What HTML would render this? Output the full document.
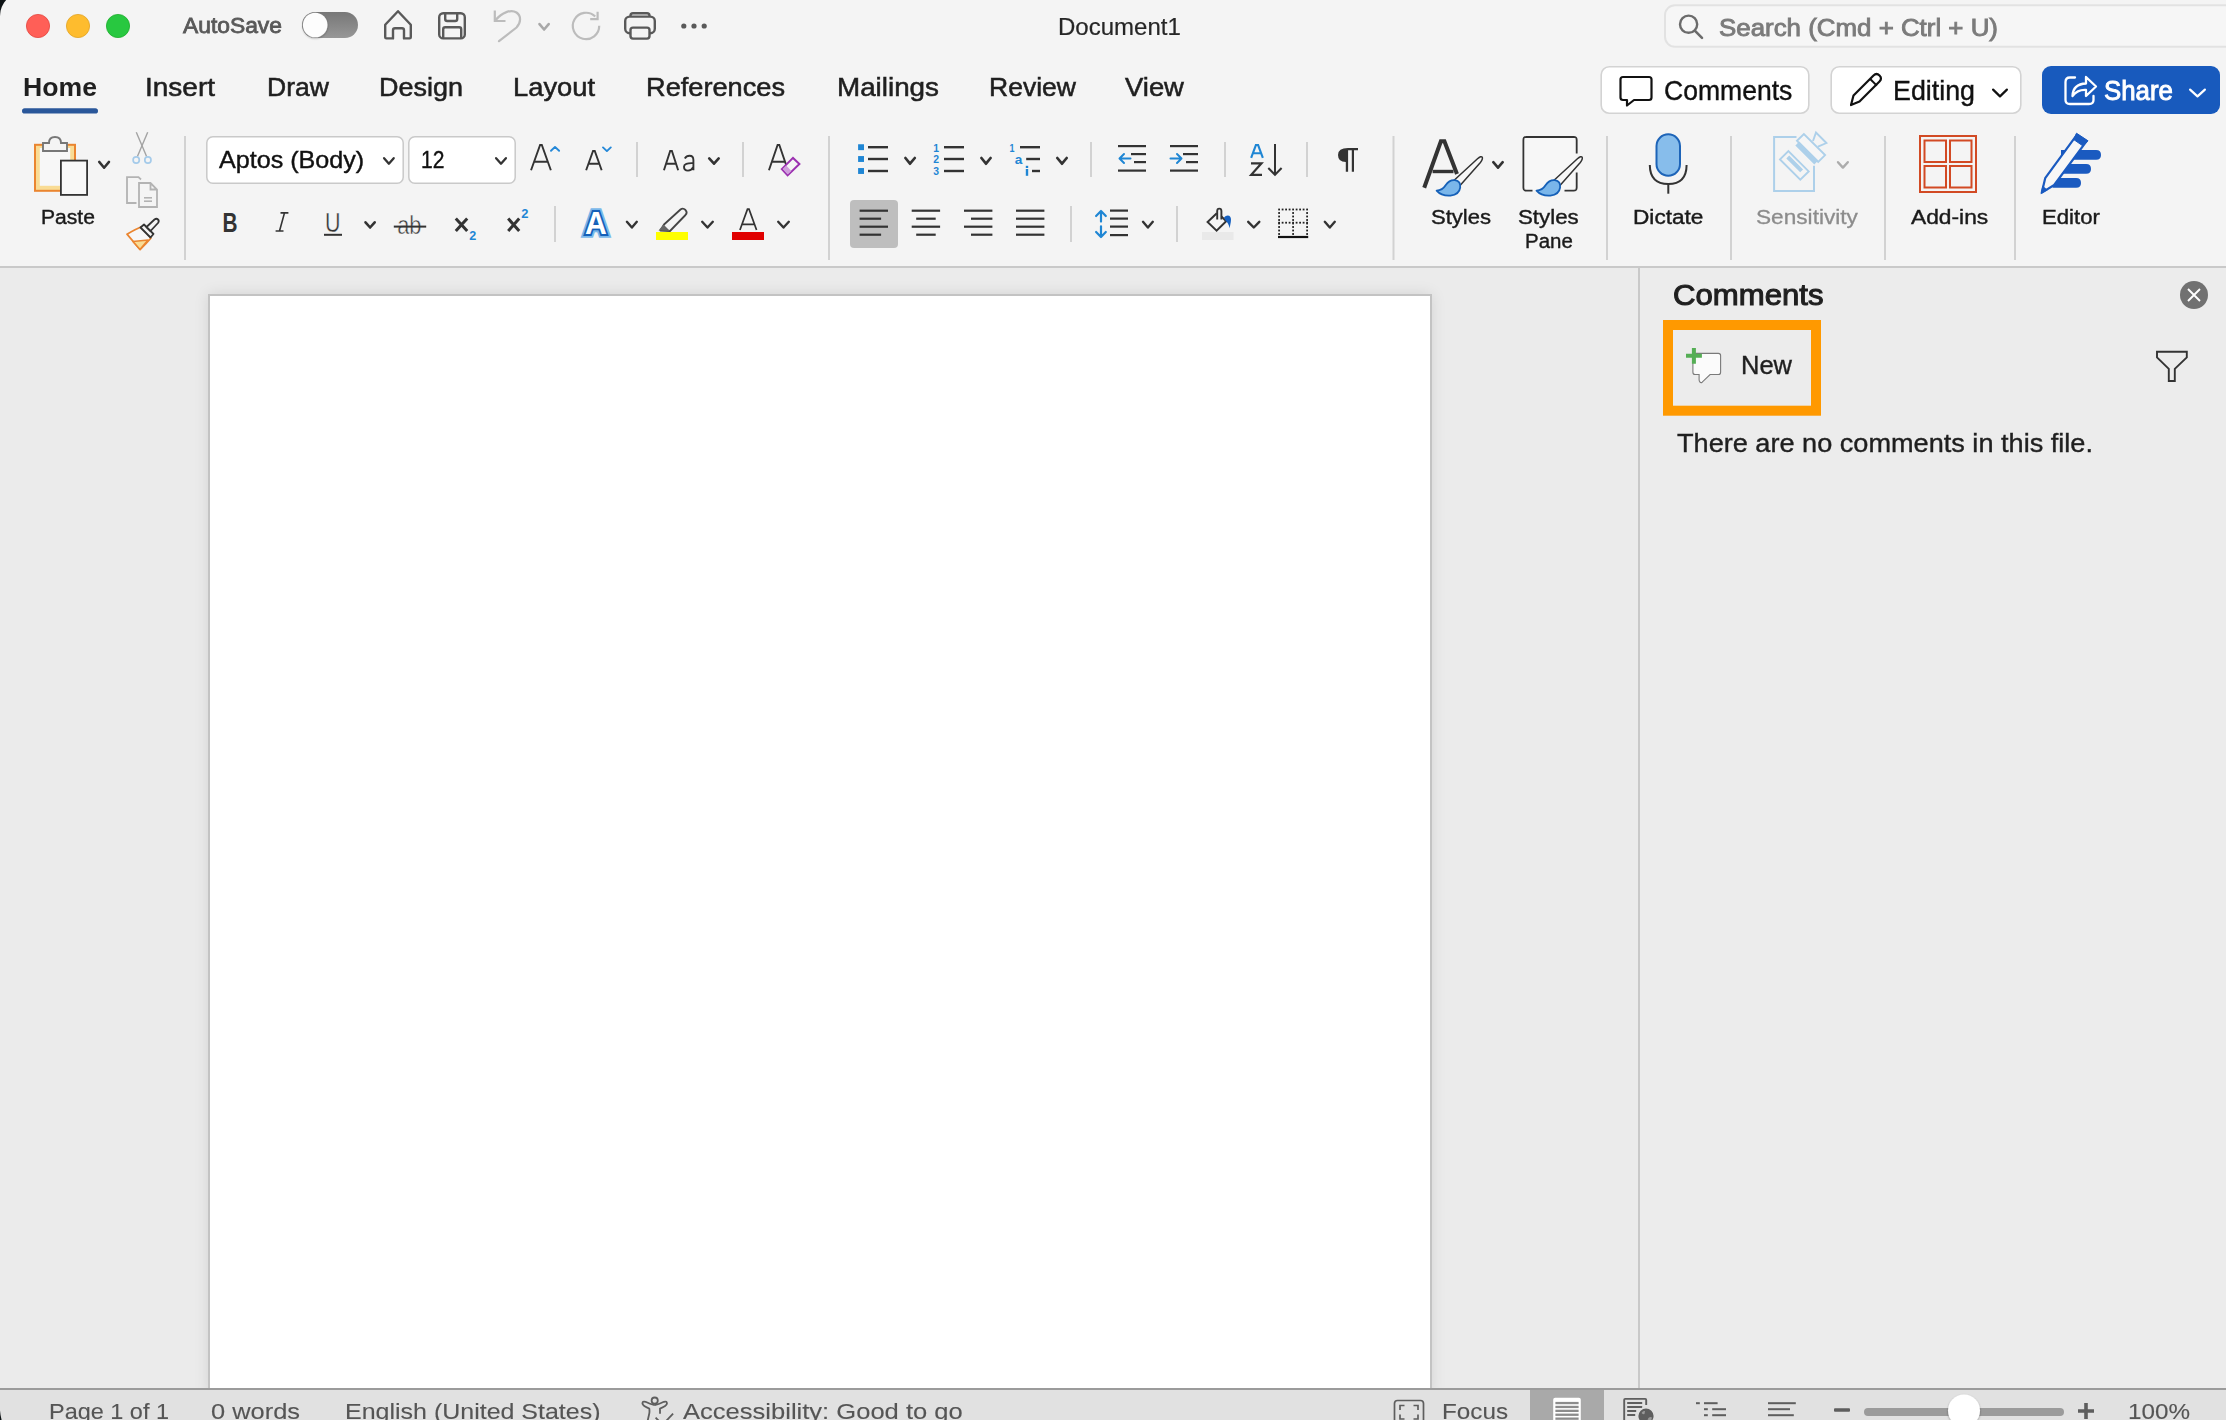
<!DOCTYPE html><html><head><meta charset="utf-8"><title>Document1</title><style>
*{margin:0;padding:0;box-sizing:border-box}
html,body{width:2226px;height:1420px;overflow:hidden;background:#0e1315}
body{position:relative;font-family:"Liberation Sans",sans-serif}
.win{position:absolute;left:0;top:-8px;width:2240px;height:1440px;background:#f4f4f4;border-top-left-radius:24px;overflow:hidden}
.abs{position:absolute}
.t{position:absolute;white-space:nowrap;line-height:0;transform-origin:0 0;font-family:"Liberation Sans",sans-serif}
svg.ov{position:absolute;left:0;top:0}
</style></head><body>
<div class="win"></div>
<div class="abs" style="left:0;top:266px;width:2226px;height:2px;background:#c9c9c9"></div>
<div class="abs" style="left:0;top:268px;width:1638px;height:1120px;background:#ebebeb"></div>
<div class="abs" style="left:1638px;top:268px;width:2px;height:1120px;background:#c9c9c9"></div>
<div class="abs" style="left:1640px;top:268px;width:586px;height:1120px;background:#ececec"></div>
<div class="abs" style="left:208px;top:294px;width:1224px;height:1100px;background:#fff;border:2px solid #c3c3c3;border-bottom:none;box-shadow:0 0 14px rgba(0,0,0,0.10)"></div>
<div class="abs" style="left:0;top:1388px;width:2226px;height:2px;background:#9b9b9b"></div>
<div class="abs" style="left:0;top:1390px;width:2226px;height:30px;background:#e1e1e1"></div>
<div class="abs" style="left:1530px;top:1390px;width:74px;height:30px;background:#a9a9a9"></div>
<svg class="ov" width="2226" height="1420" viewBox="0 0 2226 1420"><circle cx="38" cy="26" r="11.6" fill="#ff5f57" stroke="#e2463f" stroke-width="0.8"/><circle cx="78" cy="26" r="11.6" fill="#febc2e" stroke="#e1a325" stroke-width="0.8"/><circle cx="118" cy="26" r="11.6" fill="#28c840" stroke="#1dad2b" stroke-width="0.8"/><defs><linearGradient id="tg" x1="0" y1="0" x2="0" y2="1"><stop offset="0" stop-color="#777"/><stop offset="1" stop-color="#979797"/></linearGradient><filter id="sh" x="-50%" y="-50%" width="200%" height="200%"><feDropShadow dx="0" dy="1" stdDeviation="1" flood-opacity="0.35"/></filter></defs><rect x="302" y="12" width="56" height="26" rx="13" fill="url(#tg)"/><circle cx="315.2" cy="25" r="12.3" fill="#fdfdfd" filter="url(#sh)"/><path d="M385.2 24.8 L398 11.2 L410.8 24.8 V37.2 Q410.8 38.4 409.6 38.4 H404 V30.2 Q404 28.2 402 28.2 H395 Q393 28.2 393 30.2 V38.4 H386.4 Q385.2 38.4 385.2 37.2 Z" fill="none" stroke="#595959" stroke-width="2.4" stroke-linejoin="round"/><rect x="439.2" y="13.3" width="25.6" height="25.1" rx="4" fill="none" stroke="#595959" stroke-width="2.4"/><path d="M445.2 13.5 V19 Q445.2 21 447.2 21 H455.2 Q457.2 21 457.2 19 V13.5" fill="none" stroke="#595959" stroke-width="2.4"/><path d="M443.2 38.4 V29.2 Q443.2 27.2 445.2 27.2 H459.2 Q461.2 27.2 461.2 29.2 V38.4" fill="none" stroke="#595959" stroke-width="2.4"/><polyline points="494.8,10.5 494.8,21 505.5,21" fill="none" stroke="#bcbcbc" stroke-width="2.2"/><path d="M495.5 20.2 C 502 12.5, 511 9, 516.5 12.5 C 521.5 16, 521 22.5, 516.5 27.5 L 499 41.2" fill="none" stroke="#bcbcbc" stroke-width="2.2" stroke-linecap="round"/><polyline points="539.5,24.1 544.1,29.5 548.7,24.1" fill="none" stroke="#a8a8a8" stroke-width="2.6" stroke-linecap="round" stroke-linejoin="round"/><path d="M595.2 16.5 A 13.2 13.2 0 1 0 599.2 25.8" fill="none" stroke="#bcbcbc" stroke-width="2.2"/><polyline points="590.2,19.2 597.6,19.2 597.6,11.8" fill="none" stroke="#bcbcbc" stroke-width="2.2"/><rect x="630.5" y="13.2" width="19" height="8" rx="2.5" fill="none" stroke="#595959" stroke-width="2.4"/><rect x="625.2" y="16.6" width="29.6" height="16.6" rx="4.5" fill="#f4f4f4" stroke="#595959" stroke-width="2.4"/><rect x="630.5" y="27.6" width="19" height="11" rx="2.5" fill="#f4f4f4" stroke="#595959" stroke-width="2.4"/><circle cx="683.8" cy="26" r="2.6" fill="#595959"/><circle cx="694" cy="26" r="2.6" fill="#595959"/><circle cx="704.2" cy="26" r="2.6" fill="#595959"/><rect x="1665" y="5.2" width="1557.5" height="41.6" rx="10" fill="#f6f6f6" stroke="#e2e2e2" stroke-width="2"/><circle cx="1688.6" cy="24.2" r="8.6" fill="none" stroke="#6b6b6b" stroke-width="2.4"/><line x1="1694.8" y1="30.6" x2="1702" y2="37.8" stroke="#6b6b6b" stroke-width="2.6" stroke-linecap="round"/><rect x="1601.2" y="66.8" width="207.6" height="46.4" rx="8" fill="#ffffff" stroke="#d3d3d3" stroke-width="1.6"/><path d="M1623 77 H1649 Q1651.5 77 1651.5 79.5 V97.5 Q1651.5 100 1649 100 H1634 L1627 105.5 V100 H1623 Q1620.5 100 1620.5 97.5 V79.5 Q1620.5 77 1623 77 Z" fill="none" stroke="#111" stroke-width="2.2" stroke-linejoin="round"/><rect x="1831.2" y="66.8" width="189.6" height="46.4" rx="8" fill="#ffffff" stroke="#d3d3d3" stroke-width="1.6"/><path d="M1851 105 L1853.5 95.5 L1873.5 75.5 Q1876.5 72.5 1879.5 75.5 Q1882.5 78.5 1879.5 81.5 L1859.5 101.5 Z" fill="none" stroke="#111" stroke-width="2.2" stroke-linejoin="round"/><line x1="1870.2" y1="79" x2="1876.8" y2="85.6" stroke="#111" stroke-width="2"/><polyline points="1993.1,89.6 2000.0,96.4 2006.9,89.6" fill="none" stroke="#111" stroke-width="2.2" stroke-linecap="round" stroke-linejoin="round"/><rect x="2042" y="66" width="178" height="48" rx="9" fill="#185abd"/><path d="M2075 77.5 H2070 Q2065.5 77.5 2065.5 82 V100 Q2065.5 104 2070 104 H2089 Q2093.5 104 2093.5 100 V96" fill="none" stroke="#fff" stroke-width="2.3" stroke-linecap="round"/><path d="M2072.5 96 Q2073 84 2086 83.5 V77 L2096 86.5 L2086 96 V90 Q2077.5 89.5 2072.5 96 Z" fill="none" stroke="#fff" stroke-width="2.3" stroke-linejoin="round"/><polyline points="2190.1,89.6 2197.5,96.4 2204.9,89.6" fill="none" stroke="#fff" stroke-width="2.2" stroke-linecap="round" stroke-linejoin="round"/><rect x="22" y="108.2" width="76" height="5.4" rx="2.7" fill="#2a579a"/><rect x="184.0" y="136" width="2" height="124" fill="#d2d2d2"/><rect x="828.0" y="136" width="2" height="124" fill="#d2d2d2"/><rect x="1392.5" y="136" width="2" height="124" fill="#d2d2d2"/><rect x="1606.0" y="136" width="2" height="124" fill="#d2d2d2"/><rect x="1730.0" y="136" width="2" height="124" fill="#d2d2d2"/><rect x="1884.0" y="136" width="2" height="124" fill="#d2d2d2"/><rect x="2014.0" y="136" width="2" height="124" fill="#d2d2d2"/><rect x="636.0" y="142" width="2" height="35" fill="#d2d2d2"/><rect x="742.0" y="142" width="2" height="35" fill="#d2d2d2"/><rect x="1090.0" y="142" width="2" height="35" fill="#d2d2d2"/><rect x="1224.0" y="142" width="2" height="35" fill="#d2d2d2"/><rect x="1306.0" y="142" width="2" height="35" fill="#d2d2d2"/><rect x="554.0" y="206" width="2" height="36" fill="#d2d2d2"/><rect x="1070.0" y="206" width="2" height="36" fill="#d2d2d2"/><rect x="1176.0" y="206" width="2" height="36" fill="#d2d2d2"/><rect x="35" y="144.8" width="40" height="46" fill="#f9dc95" stroke="#ea8530" stroke-width="2"/><rect x="39.8" y="148" width="30.4" height="37.8" fill="#f7f7f7"/><path d="M43 151 V143 H49 Q49 137 55 137 Q61 137 61 143 H67 V151 Z" fill="#f4f4f4" stroke="#777" stroke-width="1.9"/><rect x="60.9" y="160.6" width="26.2" height="34.3" fill="#f8f8f8" stroke="#333" stroke-width="1.8"/><polyline points="99.2,161.9 104.1,167.8 109.0,161.9" fill="none" stroke="#333333" stroke-width="2.5" stroke-linecap="round" stroke-linejoin="round"/><line x1="136.3" y1="132.3" x2="146.6" y2="156.5" stroke="#a3a3a3" stroke-width="1.4"/><line x1="147.7" y1="132.3" x2="137.4" y2="156.5" stroke="#a3a3a3" stroke-width="1.4"/><circle cx="136.2" cy="160" r="3.1" fill="none" stroke="#a5cbea" stroke-width="1.7"/><circle cx="147.9" cy="160" r="3.1" fill="none" stroke="#a5cbea" stroke-width="1.7"/><path d="M136.5 203 H127 V177.2 H138.5 L141 179.5" fill="none" stroke="#b3b3b3" stroke-width="1.8"/><path d="M139 183 H150.5 L157 189.5 V207 H139 Z M150.5 183 V189.5 H157" fill="#f4f4f4" stroke="#b3b3b3" stroke-width="1.8" stroke-linejoin="miter"/><line x1="144" y1="197.8" x2="152" y2="197.8" stroke="#b3b3b3" stroke-width="1.6"/><line x1="144" y1="201.2" x2="152" y2="201.2" stroke="#b3b3b3" stroke-width="1.6"/><path d="M127 234.2 Q136 229 141 227 L151 238 Q146 244 140 249.5 Z" fill="#f7f7f7" stroke="#ea8530" stroke-width="1.8" stroke-linejoin="round"/><path d="M133 241.5 L148 240 L140 249.5 Z" fill="#f9dc95" stroke="#ea8530" stroke-width="1.6" stroke-linejoin="round"/><path d="M140.5 227.5 L144 224.5 L153.5 234 L150.5 237.5 Z" fill="#f4f4f4" stroke="#333" stroke-width="1.8" stroke-linejoin="round"/><path d="M146.5 227 L154.5 219.5 Q156.5 218 158 219.5 Q159.5 221 158 223 L150.5 231 Z" fill="#f4f4f4" stroke="#333" stroke-width="1.8" stroke-linejoin="round"/><rect x="206.8" y="136.8" width="196.4" height="46.4" rx="6" fill="#fff" stroke="#c9c9c9" stroke-width="1.5"/><polyline points="384.1,158.2 388.9,163.7 393.7,158.2" fill="none" stroke="#333333" stroke-width="2.3" stroke-linecap="round" stroke-linejoin="round"/><rect x="408.8" y="136.8" width="106.4" height="46.4" rx="6" fill="#fff" stroke="#c9c9c9" stroke-width="1.5"/><polyline points="496.1,158.2 501.0,163.7 505.9,158.2" fill="none" stroke="#333333" stroke-width="2.3" stroke-linecap="round" stroke-linejoin="round"/><path d="M531.04 170.20 L540.10 145.05 H541.81 L550.86 170.20 M534.10 161.70 H547.80" fill="none" stroke="#333333" stroke-width="1.9" stroke-linejoin="miter"/><polyline points="551.0,150.8 555.0,146.9 559.1,150.8" fill="none" stroke="#2488d8" stroke-width="1.9" stroke-linecap="round" stroke-linejoin="round"/><path d="M586.14 170.20 L593.05 150.95 H594.76 L601.66 170.20 M588.47 163.70 H599.33" fill="none" stroke="#333333" stroke-width="1.9" stroke-linejoin="miter"/><polyline points="603.0,147.4 606.9,151.1 610.8,147.4" fill="none" stroke="#2488d8" stroke-width="1.9" stroke-linecap="round" stroke-linejoin="round"/><path d="M663.94 170.20 L670.19 150.95 H671.90 L678.16 170.20 M666.06 163.70 H676.04" fill="none" stroke="#333333" stroke-width="1.9" stroke-linejoin="miter"/><path d="M684.8 158.6 Q686.5 155.8 689.5 155.8 Q693.4 155.8 693.4 160 V170.2 M693.4 163.2 Q684 162.8 684 166.8 Q684 170.6 688 170.6 Q691.5 170.6 693.4 167" fill="none" stroke="#333" stroke-width="1.9"/><polyline points="709.2,158.4 714.0,163.7 718.7,158.4" fill="none" stroke="#333333" stroke-width="2.6" stroke-linecap="round" stroke-linejoin="round"/><path d="M768.94 170.20 L777.60 145.05 H779.31 L787.96 170.20 M771.87 161.70 H785.03" fill="none" stroke="#333333" stroke-width="1.9" stroke-linejoin="miter"/><path d="M781.8 169.1 L793 157.9 L799.4 163.9 L787.6 175.4 Z" fill="#f4f4f4" stroke="#9b30b0" stroke-width="2" stroke-linejoin="miter"/><path d="M782.6 169.1 L786.2 165.5 L791.4 171 L787.7 174.5 Z" fill="#cf9ddc"/><rect x="858.1" y="144.25" width="5.9" height="5.9" fill="#1f86d4"/><rect x="868" y="146.0" width="20" height="2.4" fill="#333333"/><rect x="858.1" y="156.05" width="5.9" height="5.9" fill="#1f86d4"/><rect x="868" y="157.8" width="20" height="2.4" fill="#333333"/><rect x="858.1" y="168.05" width="5.9" height="5.9" fill="#1f86d4"/><rect x="868" y="169.8" width="20" height="2.4" fill="#333333"/><polyline points="905.4,158.0 910.0,163.7 914.8,158.0" fill="none" stroke="#333333" stroke-width="2.7" stroke-linecap="round" stroke-linejoin="round"/><text x="933.2" y="151.5" font-family="Liberation Sans" font-weight="bold" font-size="11" fill="#1f86d4" textLength="5.8" lengthAdjust="spacingAndGlyphs">1</text><rect x="944" y="146.0" width="20" height="2.4" fill="#333333"/><text x="933.2" y="163.3" font-family="Liberation Sans" font-weight="bold" font-size="11" fill="#1f86d4" textLength="5.8" lengthAdjust="spacingAndGlyphs">2</text><rect x="944" y="157.8" width="20" height="2.4" fill="#333333"/><text x="933.2" y="175.3" font-family="Liberation Sans" font-weight="bold" font-size="11" fill="#1f86d4" textLength="5.8" lengthAdjust="spacingAndGlyphs">3</text><rect x="944" y="169.8" width="20" height="2.4" fill="#333333"/><polyline points="981.4,158.0 986.0,163.7 990.6,158.0" fill="none" stroke="#333333" stroke-width="2.7" stroke-linecap="round" stroke-linejoin="round"/><text x="1009.5" y="151.5" font-family="Liberation Sans" font-weight="bold" font-size="11" fill="#1f86d4" textLength="5" lengthAdjust="spacingAndGlyphs">1</text><rect x="1020" y="146" width="20" height="2.4" fill="#333333"/><text x="1014.8" y="164" font-family="Liberation Sans" font-weight="bold" font-size="13.5" fill="#1f86d4" textLength="7.6" lengthAdjust="spacingAndGlyphs">a</text><rect x="1026.2" y="157.8" width="13.8" height="2.4" fill="#333333"/><rect x="1025.8" y="169" width="2.4" height="6.8" fill="#1f86d4"/><rect x="1025.8" y="165.8" width="2.4" height="2.2" fill="#1f86d4"/><rect x="1032" y="169.8" width="8" height="2.4" fill="#333333"/><polyline points="1057.3,158.0 1062.0,163.7 1066.7,158.0" fill="none" stroke="#333333" stroke-width="2.7" stroke-linecap="round" stroke-linejoin="round"/><rect x="1118" y="145" width="28" height="2.2" fill="#333333"/><rect x="1131" y="153" width="15" height="2.2" fill="#333333"/><rect x="1134" y="161" width="12" height="2.2" fill="#333333"/><rect x="1118" y="169.5" width="28" height="2.2" fill="#333333"/><rect x="1170" y="145" width="28" height="2.2" fill="#333333"/><rect x="1183" y="153" width="15" height="2.2" fill="#333333"/><rect x="1186" y="161" width="12" height="2.2" fill="#333333"/><rect x="1170" y="169.5" width="28" height="2.2" fill="#333333"/><path d="M1130.5 158.5 H1119.5 M1124 154 L1119.5 158.5 L1124 163" fill="none" stroke="#1f86d4" stroke-width="2" stroke-linecap="round" stroke-linejoin="round"/><path d="M1170.5 158.5 H1181.5 M1177 154 L1181.5 158.5 L1177 163" fill="none" stroke="#1f86d4" stroke-width="2" stroke-linecap="round" stroke-linejoin="round"/><path d="M1251.15 157.80 L1255.90 145.05 H1258.10 L1262.85 157.80 M1252.87 153.20 H1261.13" fill="none" stroke="#1f86d4" stroke-width="2.1" stroke-linejoin="miter"/><path d="M1251 163.3 H1261.5 L1251.2 174.8 H1262" fill="none" stroke="#333" stroke-width="2.2" stroke-linejoin="miter"/><path d="M1275 144 V175 M1268.3 168 L1275 174.8 L1281.6 168" fill="none" stroke="#333" stroke-width="2" stroke-linejoin="miter"/><path d="M1348 148 H1358 V150.3 H1354 V171.8 H1351.8 V150.3 H1348.1 V171.8 H1345.8 V162 Q1338 162 1338 155 Q1338 148 1348 148 Z" fill="#333"/><text x="222.5" y="231.8" font-family="Liberation Sans" font-weight="bold" font-size="27.5" fill="#333" textLength="15" lengthAdjust="spacingAndGlyphs">B</text><path d="M280.5 212.9 H288.4 M275.6 231 H283.5 M284.5 212.9 L279.5 231" fill="none" stroke="#333" stroke-width="1.6"/><text x="325" y="231.8" font-family="Liberation Sans" font-size="27" fill="#333" textLength="15.5" lengthAdjust="spacingAndGlyphs" stroke="#f4f4f4" stroke-width="0.4">U</text><rect x="324" y="233.8" width="18" height="2" fill="#333"/><polyline points="365.5,222.3 370.1,227.5 374.7,222.3" fill="none" stroke="#333333" stroke-width="2.6" stroke-linecap="round" stroke-linejoin="round"/><text x="397.2" y="233.6" font-family="Liberation Sans" font-size="26" fill="#3a3a3a" textLength="24.2" lengthAdjust="spacingAndGlyphs" stroke="#f4f4f4" stroke-width="0.5">ab</text><rect x="393.8" y="225.6" width="32.4" height="2" fill="#333"/><path d="M455.8 218.6 L467.2 231 M467.2 218.6 L455.8 231" stroke="#333" stroke-width="3" stroke-linecap="butt"/><text x="469.3" y="239.5" font-family="Liberation Sans" font-size="13" fill="#1f86d4" textLength="7" lengthAdjust="spacingAndGlyphs" font-weight="bold">2</text><path d="M508.2 218.6 L519.2 231 M519.2 218.6 L508.2 231" stroke="#333" stroke-width="3" stroke-linecap="butt"/><text x="521.2" y="218" font-family="Liberation Sans" font-size="13" fill="#1f86d4" textLength="7.2" lengthAdjust="spacingAndGlyphs" font-weight="bold">2</text><text x="584.9" y="234" font-family="Liberation Sans" font-weight="bold" font-size="30.7" fill="#fff" stroke="#7ab8ea" stroke-width="7.6" stroke-linejoin="miter" stroke-miterlimit="3" paint-order="stroke" textLength="21.8" lengthAdjust="spacingAndGlyphs">A</text><text x="584.9" y="234" font-family="Liberation Sans" font-weight="bold" font-size="30.7" fill="#fff" stroke="#1560b8" stroke-width="3.8" stroke-linejoin="miter" stroke-miterlimit="3" paint-order="stroke" textLength="21.8" lengthAdjust="spacingAndGlyphs">A</text><polyline points="626.9,221.8 631.9,227.5 636.8,221.8" fill="none" stroke="#333333" stroke-width="2.4" stroke-linecap="round" stroke-linejoin="round"/><path d="M660.5 230.5 L664 224.5 L680.5 209.5 Q683 207.5 685.5 210 Q687.8 212.5 685.5 215 L670 231 Z" fill="#f4f4f4" stroke="#444" stroke-width="1.8" stroke-linejoin="round"/><path d="M658.5 230.5 L663.5 224.5 L670 231 Z" fill="#666"/><rect x="656" y="232" width="32" height="8" fill="#fefe00"/><polyline points="702.2,221.8 707.5,227.5 712.8,221.8" fill="none" stroke="#333333" stroke-width="2.4" stroke-linecap="round" stroke-linejoin="round"/><path d="M739.93 230.00 L747.49 209.15 H749.01 L756.57 230.00 M742.00 224.30 H754.50" fill="none" stroke="#333333" stroke-width="1.7" stroke-linejoin="miter"/><rect x="732" y="232" width="32" height="8" fill="#e00000"/><polyline points="778.2,221.8 783.5,227.5 788.8,221.8" fill="none" stroke="#333333" stroke-width="2.4" stroke-linecap="round" stroke-linejoin="round"/><rect x="850" y="200" width="48" height="48" rx="4" fill="#bebebe"/><rect x="859.6" y="209.6" width="28.4" height="2.2" fill="#333333"/><rect x="859.6" y="217.6" width="21.5" height="2.2" fill="#333333"/><rect x="859.6" y="225.6" width="28.4" height="2.2" fill="#333333"/><rect x="859.6" y="233.6" width="21.5" height="2.2" fill="#333333"/><rect x="911.7" y="209.6" width="28.4" height="2.2" fill="#333333"/><rect x="916.2" y="217.6" width="19.5" height="2.2" fill="#333333"/><rect x="911.7" y="225.6" width="28.4" height="2.2" fill="#333333"/><rect x="916.2" y="233.6" width="19.5" height="2.2" fill="#333333"/><rect x="964" y="209.6" width="28.4" height="2.2" fill="#333333"/><rect x="971" y="217.6" width="21.4" height="2.2" fill="#333333"/><rect x="964" y="225.6" width="28.4" height="2.2" fill="#333333"/><rect x="971" y="233.6" width="21.4" height="2.2" fill="#333333"/><rect x="1016" y="209.6" width="28.4" height="2.2" fill="#333333"/><rect x="1016" y="217.6" width="28.4" height="2.2" fill="#333333"/><rect x="1016" y="225.6" width="28.4" height="2.2" fill="#333333"/><rect x="1016" y="233.6" width="28.4" height="2.2" fill="#333333"/><rect x="1110" y="209.5" width="18" height="2.2" fill="#333333"/><rect x="1110" y="217.5" width="18" height="2.2" fill="#333333"/><rect x="1110" y="225.5" width="18" height="2.2" fill="#333333"/><rect x="1110" y="234" width="18" height="2.2" fill="#333333"/><path d="M1101 211 V221.6 M1101 226.3 V236.8 M1096.1 216 L1101 211 L1105.8 216 M1096.1 232 L1101 237 L1105.8 232" fill="none" stroke="#1f86d4" stroke-width="2.2" stroke-linecap="round" stroke-linejoin="round"/><polyline points="1143.0,221.8 1147.9,227.5 1152.8,221.8" fill="none" stroke="#333333" stroke-width="2.4" stroke-linecap="round" stroke-linejoin="round"/><path d="M1216.8 213.2 L1207.6 222 L1216.6 230.6 L1226.2 221.2 L1221.4 216.4" fill="#f4f4f4" stroke="#333" stroke-width="2" stroke-linejoin="miter"/><path d="M1217.2 219.5 V211 Q1217.2 208.6 1219.3 208.6 Q1221.4 208.6 1221.4 211 V219.5" fill="none" stroke="#333" stroke-width="1.9"/><path d="M1224 217.5 Q1226.5 214.6 1229.2 215.8 Q1231.6 217.4 1230.8 222 L1229.6 228.3 Q1228.6 223 1225.5 220.5 Z" fill="#1560c0"/><rect x="1202" y="232" width="31.6" height="8" fill="#e9e9e9"/><polyline points="1248.2,221.8 1253.8,227.5 1259.3,221.8" fill="none" stroke="#333333" stroke-width="2.4" stroke-linecap="round" stroke-linejoin="round"/><rect x="1278.2" y="208.6" width="1.8" height="1.8" fill="#222"/><rect x="1278.2" y="212.1" width="1.8" height="1.8" fill="#222"/><rect x="1278.2" y="215.6" width="1.8" height="1.8" fill="#222"/><rect x="1278.2" y="219.1" width="1.8" height="1.8" fill="#222"/><rect x="1278.2" y="221.8" width="1.8" height="1.8" fill="#222"/><rect x="1278.2" y="222.6" width="1.8" height="1.8" fill="#222"/><rect x="1278.2" y="226.1" width="1.8" height="1.8" fill="#222"/><rect x="1278.2" y="229.6" width="1.8" height="1.8" fill="#222"/><rect x="1278.2" y="233.1" width="1.8" height="1.8" fill="#222"/><rect x="1281.7" y="208.6" width="1.8" height="1.8" fill="#222"/><rect x="1281.7" y="221.8" width="1.8" height="1.8" fill="#222"/><rect x="1285.2" y="208.6" width="1.8" height="1.8" fill="#222"/><rect x="1285.2" y="221.8" width="1.8" height="1.8" fill="#222"/><rect x="1288.7" y="208.6" width="1.8" height="1.8" fill="#222"/><rect x="1288.7" y="221.8" width="1.8" height="1.8" fill="#222"/><rect x="1292.2" y="208.6" width="1.8" height="1.8" fill="#222"/><rect x="1292.2" y="212.1" width="1.8" height="1.8" fill="#222"/><rect x="1292.2" y="215.6" width="1.8" height="1.8" fill="#222"/><rect x="1292.2" y="219.1" width="1.8" height="1.8" fill="#222"/><rect x="1292.2" y="221.8" width="1.8" height="1.8" fill="#222"/><rect x="1292.2" y="222.6" width="1.8" height="1.8" fill="#222"/><rect x="1292.2" y="226.1" width="1.8" height="1.8" fill="#222"/><rect x="1292.2" y="229.6" width="1.8" height="1.8" fill="#222"/><rect x="1292.2" y="233.1" width="1.8" height="1.8" fill="#222"/><rect x="1295.7" y="208.6" width="1.8" height="1.8" fill="#222"/><rect x="1295.7" y="221.8" width="1.8" height="1.8" fill="#222"/><rect x="1299.2" y="208.6" width="1.8" height="1.8" fill="#222"/><rect x="1299.2" y="221.8" width="1.8" height="1.8" fill="#222"/><rect x="1302.7" y="208.6" width="1.8" height="1.8" fill="#222"/><rect x="1302.7" y="221.8" width="1.8" height="1.8" fill="#222"/><rect x="1306.2" y="208.6" width="1.8" height="1.8" fill="#222"/><rect x="1306.2" y="212.1" width="1.8" height="1.8" fill="#222"/><rect x="1306.2" y="215.6" width="1.8" height="1.8" fill="#222"/><rect x="1306.2" y="219.1" width="1.8" height="1.8" fill="#222"/><rect x="1306.2" y="221.8" width="1.8" height="1.8" fill="#222"/><rect x="1306.2" y="222.6" width="1.8" height="1.8" fill="#222"/><rect x="1306.2" y="226.1" width="1.8" height="1.8" fill="#222"/><rect x="1306.2" y="229.6" width="1.8" height="1.8" fill="#222"/><rect x="1306.2" y="233.1" width="1.8" height="1.8" fill="#222"/><rect x="1278" y="235.9" width="30.2" height="2.2" fill="#111"/><polyline points="1324.8,221.8 1329.8,227.5 1334.8,221.8" fill="none" stroke="#333333" stroke-width="2.4" stroke-linecap="round" stroke-linejoin="round"/><path d="M1424.2 187.7 L1440.9 141.2 H1444.4 L1457 174" fill="none" stroke="#333" stroke-width="4" stroke-linejoin="miter"/><path d="M1432.6 171.5 H1453.5" stroke="#333" stroke-width="3.4"/><path d="M1453.6 180.8 L1477.5 158.8 Q1481.2 155.6 1482.2 157.2 Q1483.2 159 1480.2 162.8 L1459.6 186 Z" fill="#f7f7f7" stroke="#333" stroke-width="1.5" stroke-linejoin="round"/><path d="M1436.6 190.6 Q1442.5 190.2 1445.6 185.2 Q1449.5 179.6 1455 180.2 Q1461 181.2 1460.2 187.6 Q1459.2 194.6 1450.5 195.6 Q1441.5 196.2 1436.6 190.6 Z" fill="#7ab6ea" stroke="#1560b8" stroke-width="1.8" stroke-linejoin="round"/><polyline points="1493.3,162.2 1498.0,167.7 1502.7,162.2" fill="none" stroke="#333333" stroke-width="2.6" stroke-linecap="round" stroke-linejoin="round"/><path d="M1532.5 190.6 H1526.5 Q1523.5 190.6 1523.5 187.6 V140 Q1523.5 137 1526.5 137 H1573.6 Q1576.6 137 1576.6 140 V153.6 M1576.6 172.4 V187.6 Q1576.6 190.6 1573.6 190.6 H1564.5" fill="none" stroke="#333" stroke-width="2"/><rect x="1524.5" y="138" width="51" height="51.6" fill="#f7f7f7" opacity="0.9"/><path d="M1553.5 180.8 L1577.4 158.8 Q1581.1000000000001 155.6 1582.1000000000001 157.2 Q1583.1000000000001 159 1580.1000000000001 162.8 L1559.5 186 Z" fill="#f7f7f7" stroke="#333" stroke-width="1.5" stroke-linejoin="round"/><path d="M1536.5 190.6 Q1542.4 190.2 1545.5 185.2 Q1549.4 179.6 1554.9 180.2 Q1560.9 181.2 1560.1000000000001 187.6 Q1559.1000000000001 194.6 1550.4 195.6 Q1541.4 196.2 1536.5 190.6 Z" fill="#7ab6ea" stroke="#1560b8" stroke-width="1.8" stroke-linejoin="round"/><rect x="1656.5" y="134.3" width="23.5" height="41.4" rx="11.75" fill="#87bdeb" stroke="#1d64b8" stroke-width="2"/><path d="M1649.8 165 Q1650 184 1668.3 184 Q1686.5 184 1686.6 165" fill="none" stroke="#333" stroke-width="2"/><line x1="1668.3" y1="184" x2="1668.3" y2="193.7" stroke="#333" stroke-width="2"/><path d="M1796.5 137 H1774.1 V190.9 H1814 V165.8" fill="none" stroke="#add0ea" stroke-width="2"/><path d="M1780 159.4 L1788.4 151.1 L1808.7 171.4 L1800.3 179.7 Z" fill="none" stroke="#add0ea" stroke-width="1.9"/><path d="M1787.2 158.5 L1789.2 156.4 L1802.2 169.4 L1800.2 171.4 Z" fill="#add0ea" stroke="#add0ea" stroke-width="1.2"/><path d="M1797 140.8 L1803.9 134 L1825.1 155.1 L1818.2 162 Z" fill="#f6f6f6" stroke="#add0ea" stroke-width="1.9"/><path d="M1797 145.5 L1799.2 143.3 L1816.5 160.5 L1814.3 162.7 Z" fill="#add0ea" stroke="#add0ea" stroke-width="2.4"/><path d="M1813 141 L1816 132.5 L1826.4 143 L1818 146.6" fill="none" stroke="#add0ea" stroke-width="1.9" stroke-linejoin="miter"/><polyline points="1838.0,162.2 1842.9,167.6 1847.8,162.2" fill="none" stroke="#acacac" stroke-width="2.4" stroke-linecap="round" stroke-linejoin="round"/><rect x="1920" y="136" width="56" height="56" fill="none" stroke="#d24a24" stroke-width="2"/><rect x="1924.5" y="140.5" width="21.5" height="21.5" fill="none" stroke="#d24a24" stroke-width="2"/><rect x="1950" y="140.5" width="21.5" height="21.5" fill="none" stroke="#d24a24" stroke-width="2"/><rect x="1924.5" y="166" width="21.5" height="21.5" fill="none" stroke="#d24a24" stroke-width="2"/><rect x="1950" y="166" width="21.5" height="21.5" fill="none" stroke="#d24a24" stroke-width="2"/><path d="M2061 150.1 H2096.2 Q2101 150.1 2101 155 Q2101 159.8 2096.2 159.8 H2061 Z" fill="#1a5ac0"/><path d="M2058 164.1 H2086.2 Q2091 164.1 2091 169 Q2091 173.8 2086.2 173.8 H2058 Z" fill="#1a5ac0"/><path d="M2052.7 178.1 H2076.2 Q2081 178.1 2081 183 Q2081 187.8 2076.2 187.8 H2052.7 Z" fill="#1a5ac0"/><path d="M2041.8 192.6 L2045.2 178.2 L2076.8 134.8 L2086.4 141.4 L2054.2 185 Z" fill="#f7f7f7" stroke="#1a5ac0" stroke-width="2.2" stroke-linejoin="round"/><path d="M2076.5 133.2 L2088 140.8 L2083 146 L2073.8 139.6 Z" fill="#1a5ac0" stroke="#1a5ac0" stroke-width="1" stroke-linejoin="round"/><path d="M2040.6 194.2 L2042.4 185.5 L2047.8 190 Z" fill="#1a5ac0"/><circle cx="2194" cy="295" r="14" fill="#717171"/><path d="M2188 289 L2200 301 M2200 289 L2188 301" stroke="#fff" stroke-width="1.9" stroke-linecap="butt"/><rect x="1668" y="325" width="148" height="85.7" fill="none" stroke="#ff9900" stroke-width="10"/><path d="M1695.2 353.4 H1718.4 Q1720.6 353.4 1720.6 355.6 V372.2 Q1720.6 374.5 1718.4 374.5 H1710.1 L1702.2 382.2 Q1700.8 383.2 1699.6 381.6 Q1699.1 380.8 1699.1 379.6 V374.5 H1695.2 Q1692.9 374.5 1692.9 372.2 V355.6 Q1692.9 353.4 1695.2 353.4 Z" fill="#fbfbfb" stroke="#7a7a7a" stroke-width="1.1"/><path d="M1693.9 348 V363.8 M1686 355.85 H1701.9" stroke="#55ae55" stroke-width="4"/><path d="M2157 351.8 H2186.8 V357.4 L2174.8 368.8 V381 H2168.8 V368.8 L2157 357.4 Z" fill="none" stroke="#333" stroke-width="1.9" stroke-linejoin="miter"/><circle cx="654.7" cy="1400.6" r="3.1" fill="none" stroke="#5e5e5e" stroke-width="1.8"/><path d="M654.7 1405.2 Q650 1404 645.5 1401.8 Q642.2 1400.8 642.5 1403.8 Q643 1406 649.3 1408.6 Q649.8 1412 649 1414.8 L647.6 1421 M654.7 1405.2 Q659.4 1404 663.9 1401.8 Q667.2 1400.8 666.9 1403.8 Q666.4 1406 660 1408.6 V1413.8" fill="none" stroke="#5e5e5e" stroke-width="1.8" stroke-linejoin="round"/><path d="M655.6 1417.7 L659 1421 M666.1 1421 L673.1 1413.6" fill="none" stroke="#5e5e5e" stroke-width="1.8"/><rect x="1394.5" y="1400.5" width="29" height="25" rx="3" fill="none" stroke="#5e5e5e" stroke-width="1.7"/><path d="M1400 1410 V1405.5 H1404.5 M1413.5 1405.5 H1418 V1410 M1400 1414.5 V1419 H1404.5 M1418 1414.5 V1419 H1413.5" fill="none" stroke="#5e5e5e" stroke-width="1.7"/><rect x="1553.2" y="1397.8" width="27.6" height="30" rx="2" fill="#fff"/><rect x="1555.4" y="1400.2" width="23.2" height="30" fill="#fff"/><rect x="1555.4" y="1401.9" width="23.2" height="2.3" fill="#8c8c8c"/><rect x="1555.4" y="1405.8" width="23.2" height="2.3" fill="#8c8c8c"/><rect x="1555.4" y="1409.7" width="23.2" height="2.3" fill="#8c8c8c"/><rect x="1555.4" y="1413.6" width="23.2" height="2.3" fill="#8c8c8c"/><rect x="1555.4" y="1417.5" width="23.2" height="2.3" fill="#8c8c8c"/><path d="M1647 1422 H1625 Q1624.2 1422 1624.2 1421 V1399.8 Q1624.2 1398.9 1625.2 1398.9 H1645.2 Q1646.2 1398.9 1646.2 1399.9 V1405" fill="none" stroke="#5e5e5e" stroke-width="1.9"/><rect x="1627.2" y="1402" width="15" height="2" fill="#5e5e5e"/><rect x="1627.2" y="1406" width="15" height="2" fill="#5e5e5e"/><rect x="1627.2" y="1410" width="9" height="2" fill="#5e5e5e"/><rect x="1627.2" y="1414" width="8" height="2" fill="#5e5e5e"/><circle cx="1646" cy="1416" r="8.4" fill="#5e5e5e" stroke="#e1e1e1" stroke-width="1.6"/><path d="M1641.5 1413 Q1643 1410.5 1645 1411 L1644.5 1414 Q1642.5 1414.5 1641.5 1413 Z M1647.5 1419.5 Q1649.5 1416 1652 1417.5 L1651 1421 Z" fill="#9a9a9a"/><rect x="1696" y="1402.2" width="3.8" height="2" fill="#5e5e5e"/><rect x="1704" y="1402.2" width="13.6" height="2" fill="#5e5e5e"/><rect x="1704" y="1408.2" width="3.8" height="2" fill="#5e5e5e"/><rect x="1712.2" y="1408.2" width="13.8" height="2" fill="#5e5e5e"/><rect x="1704" y="1414.2" width="3.8" height="2" fill="#5e5e5e"/><rect x="1712.2" y="1414.2" width="13.8" height="2" fill="#5e5e5e"/><rect x="1768" y="1402.2" width="27.8" height="2" fill="#5e5e5e"/><rect x="1768" y="1408.2" width="22" height="2" fill="#5e5e5e"/><rect x="1768" y="1414.2" width="25.8" height="2" fill="#5e5e5e"/><path d="M0 1410.5 V1420 H1.6 Q0.4 1415.5 0 1410.5 Z" fill="#0e1315"/><rect x="1834" y="1408.2" width="16" height="3.6" rx="1" fill="#5e5e5e"/><rect x="1864" y="1408" width="200" height="8" rx="4" fill="#9b9b9b"/><circle cx="1964" cy="1410.5" r="16" fill="#fff" filter="url(#sh)"/><path d="M2078 1411 H2094 M2086 1403 V1419" stroke="#5e5e5e" stroke-width="3.6"/></svg>
<div class="t" id="autosave" style="left:183.00px;top:26.40px;font-size:21.65px;font-weight:normal;color:#595959;transform:scaleX(1.0547);-webkit-text-stroke:0.8px #595959;">AutoSave</div>
<div class="t" id="doc1" style="left:1057.60px;top:26.77px;font-size:23.74px;font-weight:normal;color:#262626;transform:scaleX(1.0122);-webkit-text-stroke:0.2px #262626;">Document1</div>
<div class="t" id="search" style="left:1719.00px;top:27.68px;font-size:24.58px;font-weight:normal;color:#7b7b7b;transform:scaleX(1.0529);-webkit-text-stroke:0.9px #7b7b7b;">Search (Cmd + Ctrl + U)</div>
<div class="t" id="t_home" style="left:23.00px;top:87.01px;font-size:26.54px;font-weight:bold;color:#1f1f1f;transform:scaleX(1.0038);">Home</div>
<div class="t" id="t_insert" style="left:145.00px;top:87.01px;font-size:26.54px;font-weight:normal;color:#1f1f1f;transform:scaleX(1.0547);-webkit-text-stroke:0.55px #1f1f1f;">Insert</div>
<div class="t" id="t_draw" style="left:267.00px;top:87.01px;font-size:26.54px;font-weight:normal;color:#1f1f1f;transform:scaleX(1.0002);-webkit-text-stroke:0.55px #1f1f1f;">Draw</div>
<div class="t" id="t_design" style="left:379.00px;top:87.01px;font-size:26.54px;font-weight:normal;color:#1f1f1f;transform:scaleX(1.0169);-webkit-text-stroke:0.55px #1f1f1f;">Design</div>
<div class="t" id="t_layout" style="left:513.00px;top:87.01px;font-size:26.54px;font-weight:normal;color:#1f1f1f;transform:scaleX(1.0293);-webkit-text-stroke:0.55px #1f1f1f;">Layout</div>
<div class="t" id="t_refs" style="left:646.00px;top:87.01px;font-size:26.54px;font-weight:normal;color:#1f1f1f;transform:scaleX(1.0243);-webkit-text-stroke:0.55px #1f1f1f;">References</div>
<div class="t" id="t_mail" style="left:837.00px;top:87.01px;font-size:26.54px;font-weight:normal;color:#1f1f1f;transform:scaleX(1.0479);-webkit-text-stroke:0.55px #1f1f1f;">Mailings</div>
<div class="t" id="t_review" style="left:989.00px;top:87.01px;font-size:26.54px;font-weight:normal;color:#1f1f1f;transform:scaleX(0.9989);-webkit-text-stroke:0.55px #1f1f1f;">Review</div>
<div class="t" id="t_view" style="left:1125.00px;top:87.01px;font-size:26.54px;font-weight:normal;color:#1f1f1f;transform:scaleX(1.0332);-webkit-text-stroke:0.55px #1f1f1f;">View</div>
<div class="t" id="b_comments" style="left:1663.60px;top:90.71px;font-size:27.37px;font-weight:normal;color:#111111;transform:scaleX(0.9701);-webkit-text-stroke:0.4px #111111;">Comments</div>
<div class="t" id="b_editing" style="left:1893.00px;top:90.71px;font-size:27.37px;font-weight:normal;color:#111111;transform:scaleX(0.9796);-webkit-text-stroke:0.4px #111111;">Editing</div>
<div class="t" id="b_share" style="left:2104.00px;top:90.71px;font-size:27.37px;font-weight:normal;color:#ffffff;transform:scaleX(0.9448);-webkit-text-stroke:0.95px #ffffff;">Share</div>
<div class="t" id="paste" style="left:41.00px;top:216.73px;font-size:20.39px;font-weight:normal;color:#1a1a1a;transform:scaleX(1.0357);-webkit-text-stroke:0.4px #1a1a1a;">Paste</div>
<div class="t" id="font" style="left:218.70px;top:159.93px;font-size:24.16px;font-weight:normal;color:#111111;transform:scaleX(1.0397);-webkit-text-stroke:0.4px #111111;">Aptos (Body)</div>
<div class="t" id="size" style="left:420.70px;top:159.93px;font-size:24.16px;font-weight:normal;color:#111111;transform:scaleX(0.8709);-webkit-text-stroke:0.4px #111111;">12</div>
<div class="t" id="styles" style="left:1430.60px;top:216.73px;font-size:20.39px;font-weight:normal;color:#1a1a1a;transform:scaleX(1.0824);-webkit-text-stroke:0.4px #1a1a1a;">Styles</div>
<div class="t" id="stylesp1" style="left:1518.00px;top:216.73px;font-size:20.39px;font-weight:normal;color:#1a1a1a;transform:scaleX(1.0932);-webkit-text-stroke:0.4px #1a1a1a;">Styles</div>
<div class="t" id="stylesp2" style="left:1524.70px;top:240.93px;font-size:20.39px;font-weight:normal;color:#1a1a1a;transform:scaleX(1.0039);-webkit-text-stroke:0.4px #1a1a1a;">Pane</div>
<div class="t" id="dictate" style="left:1633.00px;top:217.13px;font-size:20.39px;font-weight:normal;color:#1a1a1a;transform:scaleX(1.1110);-webkit-text-stroke:0.4px #1a1a1a;">Dictate</div>
<div class="t" id="sens" style="left:1756.00px;top:217.13px;font-size:20.39px;font-weight:normal;color:#8c8c8c;transform:scaleX(1.1114);-webkit-text-stroke:0.3px #8c8c8c;">Sensitivity</div>
<div class="t" id="addins" style="left:1910.70px;top:217.13px;font-size:20.39px;font-weight:normal;color:#1a1a1a;transform:scaleX(1.1179);-webkit-text-stroke:0.4px #1a1a1a;">Add-ins</div>
<div class="t" id="editor" style="left:2041.50px;top:217.13px;font-size:20.39px;font-weight:normal;color:#1a1a1a;transform:scaleX(1.0871);-webkit-text-stroke:0.4px #1a1a1a;">Editor</div>
<div class="t" id="c_head" style="left:1673.00px;top:295.24px;font-size:29.61px;font-weight:normal;color:#1f1f1f;transform:scaleX(1.0520);-webkit-text-stroke:1.05px #1f1f1f;">Comments</div>
<div class="t" id="c_new" style="left:1741.00px;top:364.60px;font-size:25.98px;font-weight:normal;color:#1f1f1f;transform:scaleX(0.9801);-webkit-text-stroke:0.4px #1f1f1f;">New</div>
<div class="t" id="c_none" style="left:1677.00px;top:442.96px;font-size:26.68px;font-weight:normal;color:#1f1f1f;transform:scaleX(1.0166);-webkit-text-stroke:0.4px #1f1f1f;">There are no comments in this file.</div>
<div class="t" id="s_page" style="left:49.00px;top:1410.66px;font-size:22.91px;font-weight:normal;color:#555555;transform:scaleX(1.0242);-webkit-text-stroke:0.12px #555555;">Page 1 of 1</div>
<div class="t" id="s_words" style="left:211.00px;top:1410.66px;font-size:22.91px;font-weight:normal;color:#555555;transform:scaleX(1.1099);-webkit-text-stroke:0.12px #555555;">0 words</div>
<div class="t" id="s_lang" style="left:344.50px;top:1410.66px;font-size:22.91px;font-weight:normal;color:#555555;transform:scaleX(1.0907);-webkit-text-stroke:0.12px #555555;">English (United States)</div>
<div class="t" id="s_acc" style="left:683.00px;top:1410.66px;font-size:22.91px;font-weight:normal;color:#555555;transform:scaleX(1.1152);-webkit-text-stroke:0.12px #555555;">Accessibility: Good to go</div>
<div class="t" id="s_focus" style="left:1442.00px;top:1410.66px;font-size:22.91px;font-weight:normal;color:#555555;transform:scaleX(1.0582);-webkit-text-stroke:0.12px #555555;">Focus</div>
<div class="t" id="s_zoom" style="left:2128.00px;top:1410.66px;font-size:22.91px;font-weight:normal;color:#555555;transform:scaleX(1.0582);-webkit-text-stroke:0.12px #555555;">100%</div>
</body></html>
